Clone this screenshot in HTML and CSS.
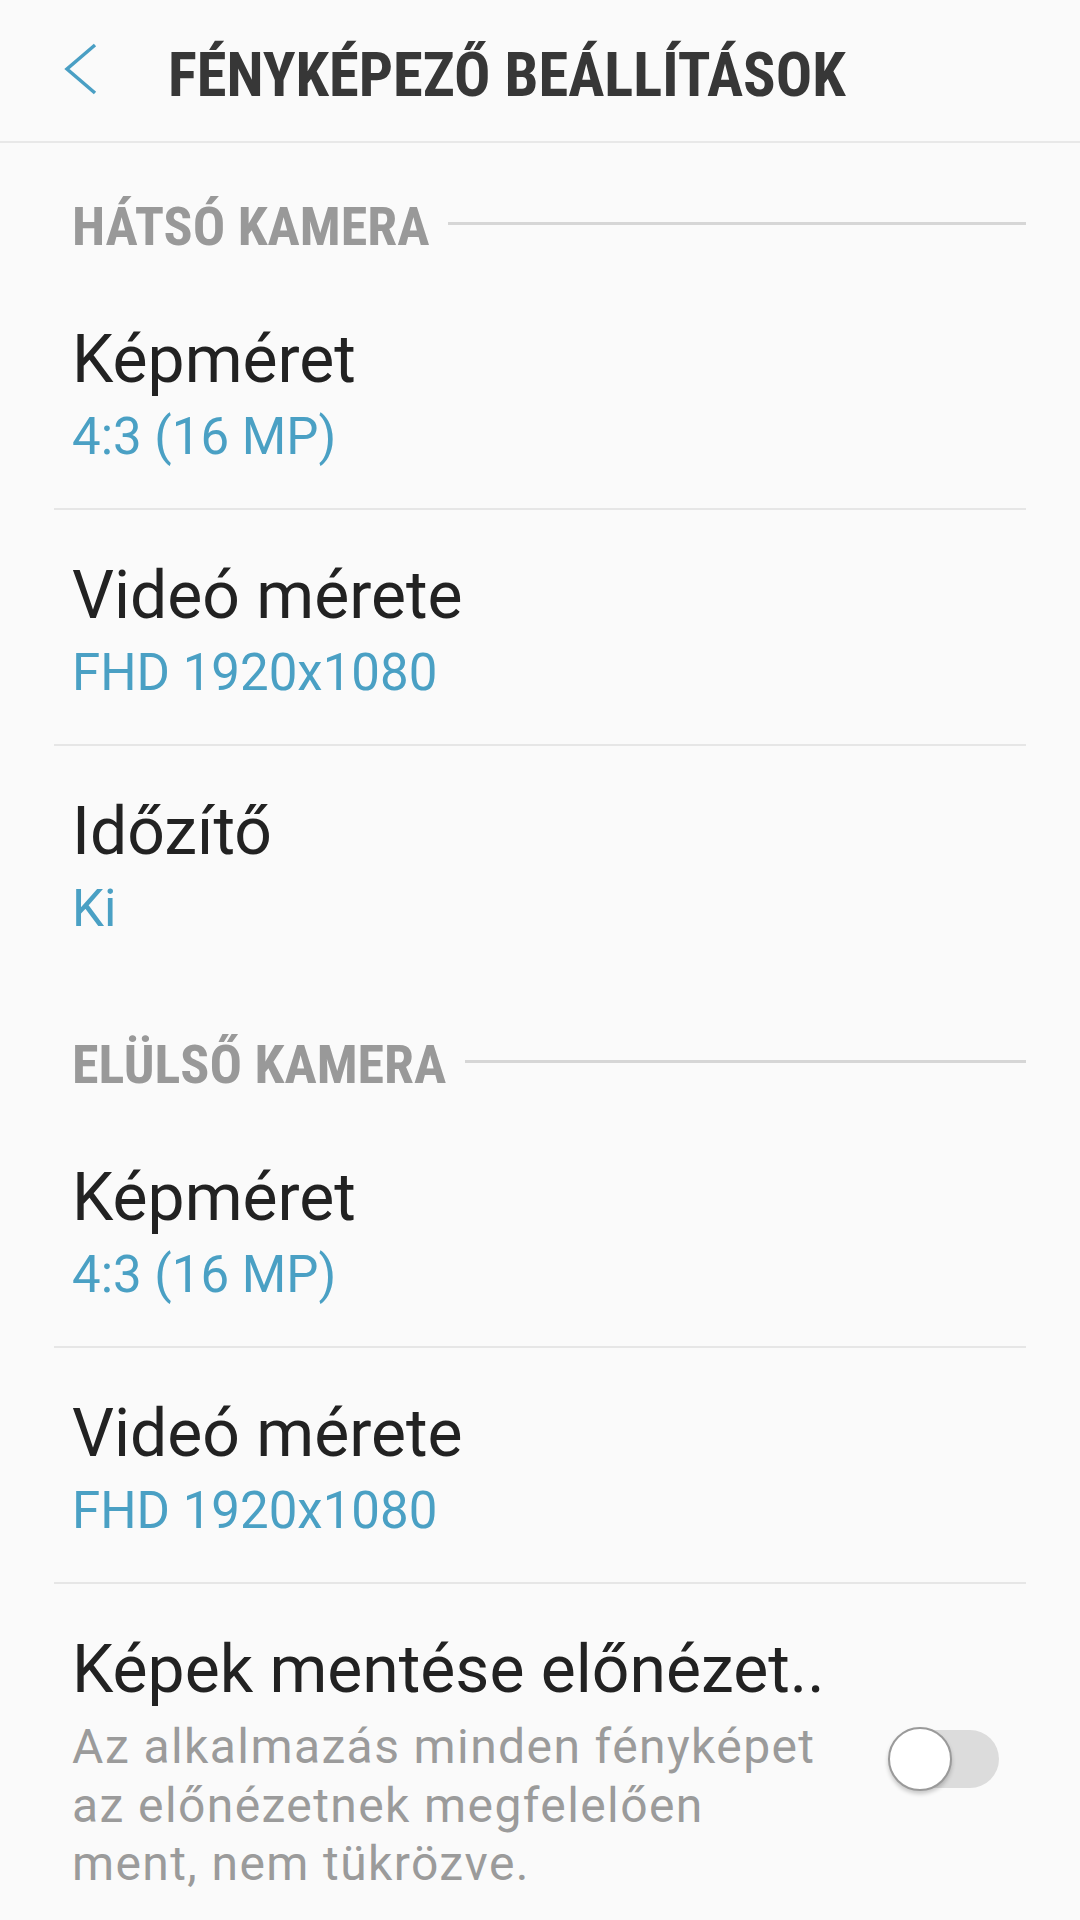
FILE: index.html
```html
<!DOCTYPE html>
<html lang="hu">
<head>
  <meta charset="UTF-8">
  <title>Fényképező beállítások</title>
  <meta name="viewport" content="width=1080, initial-scale=1.0">
  <link rel="stylesheet" href="styles.css">
</head>
<body>

  <header class="appbar">
    <svg class="back" viewBox="0 0 40 56" width="40" height="56">
      <polyline points="35,4 7,28 35,52" fill="none" stroke="#4a9fc4" stroke-width="3.5" stroke-linejoin="miter"/>
    </svg>
    <h1 class="title">FÉNYKÉPEZŐ BEÁLLÍTÁSOK</h1>
  </header>

  <main class="list">
    <section class="group">
      <div class="group-head">
        <span class="group-name">HÁTSÓ KAMERA</span>
        <div class="group-line"></div>
      </div>
      <div class="item">
        <div class="item-title">Képméret</div>
        <div class="item-value">4:3 (16 MP)</div>
      </div>
      <div class="item">
        <div class="item-title">Videó mérete</div>
        <div class="item-value">FHD 1920x1080</div>
      </div>
      <div class="item">
        <div class="item-title">Időzítő</div>
        <div class="item-value">Ki</div>
      </div>
    </section>

    <section class="group">
      <div class="group-head">
        <span class="group-name">ELÜLSŐ KAMERA</span>
        <div class="group-line"></div>
      </div>
      <div class="item">
        <div class="item-title">Képméret</div>
        <div class="item-value">4:3 (16 MP)</div>
      </div>
      <div class="item">
        <div class="item-title">Videó mérete</div>
        <div class="item-value">FHD 1920x1080</div>
      </div>
      <div class="item item-switch">
        <div class="item-text">
          <div class="item-title">Képek mentése előnézet..</div>
          <div class="item-desc">Az alkalmazás minden fényképet az előnézetnek megfelelően ment, nem tükrözve.</div>
        </div>
        <div class="switch">
          <div class="switch-track"></div>
          <div class="switch-thumb"></div>
        </div>
      </div>
    </section>
  </main>

</body>
</html>
```

FILE: styles.css
```css
* {
  box-sizing: border-box;
}

body {
  margin: 0;
  background: #fafafa;
  font-family: Roboto, "Noto Sans", sans-serif;
  color: #222;
  width: 1080px;
  height: 1920px;
  overflow: hidden;
}

/* top bar */
.appbar {
  height: 143px;
  display: flex;
  align-items: center;
  padding: 10px 0 0 60px;
  border-bottom: 2px solid #e8e8e8;
}

.back {
  flex: none;
  margin-top: -14px;
}

.title {
  margin: 0 0 0 68px;
  font-family: "Roboto Condensed", Roboto, sans-serif;
  font-stretch: condensed;
  font-weight: 700;
  font-size: 60.5px;
  line-height: 76px;
  color: #373737;
}

/* list */
.list {
  margin: 0 54px;
}

.group-head {
  height: 131px;
  display: flex;
  align-items: flex-start;
  padding: 54px 0 0 18px;
}

.group-name {
  font-family: "Roboto Condensed", Roboto, sans-serif;
  font-stretch: condensed;
  font-weight: 700;
  font-size: 54px;
  line-height: 60px;
  color: #999;
  white-space: nowrap;
}

.group-line {
  flex: 1;
  height: 3px;
  margin: 25px 0 0 19px;
  background: #d6d6d6;
}

.item {
  padding: 48px 0 32px 18px;
  border-bottom: 2px solid #e6e6e6;
}

.item:last-child {
  border-bottom: none;
  padding-bottom: 33px;
}

.item-title {
  font-size: 66px;
  line-height: 76px;
  color: #222;
  white-space: nowrap;
}

.item-value {
  font-size: 51px;
  line-height: 78px;
  color: #4aa0c4;
}

.item-desc {
  margin-top: 10px;
  font-size: 48px;
  line-height: 58.5px;
  letter-spacing: 1.4px;
  color: #9b9b9b;
}

/* toggle row */
.item-switch {
  display: flex;
  align-items: center;
  padding-right: 27px;
}

.item-text {
  flex: 1;
  padding-right: 60px;
}

.switch {
  position: relative;
  flex: none;
  width: 111px;
  height: 64px;
  margin-top: -8px;
}

.switch-track {
  position: absolute;
  left: 8px;
  right: 0;
  top: 3px;
  height: 58px;
  border-radius: 29px;
  background: #dcdcdc;
}

.switch-thumb {
  position: absolute;
  left: 0;
  top: 0;
  width: 64px;
  height: 64px;
  border-radius: 50%;
  background: #fff;
  border: 2px solid #9a9a9a;
  box-shadow: 0 3px 4px rgba(0, 0, 0, 0.2);
}
```
